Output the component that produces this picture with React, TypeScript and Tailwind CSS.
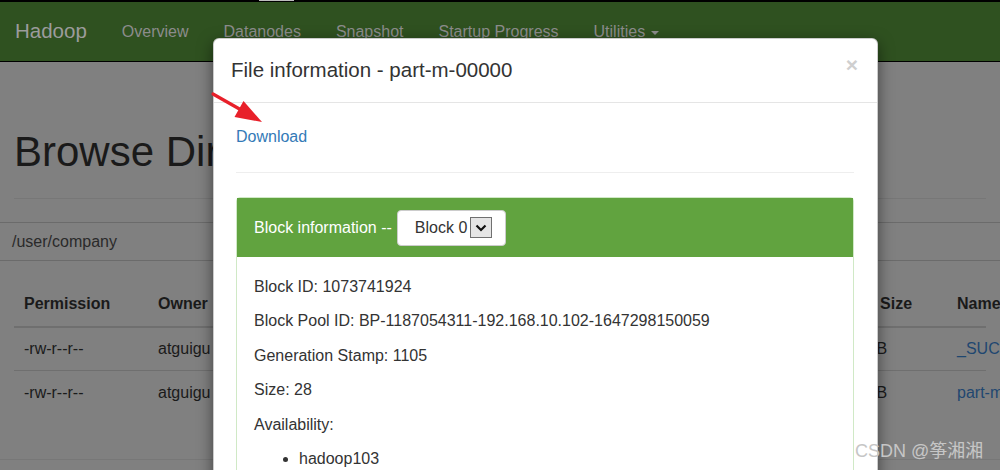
import React from 'react';

const navLinks = ['Overview', 'Datanodes', 'Snapshot', 'Startup Progress'];

const blockLines = [
  'Block ID: 1073741924',
  'Block Pool ID: BP-1187054311-192.168.10.102-1647298150059',
  'Generation Stamp: 1105',
  'Size: 28',
  'Availability:',
];

const rowGrid = 'grid grid-cols-[134px_130px_130px_100px_200px_114px_125px_1fr] items-center whitespace-nowrap';

const App: React.FC = () => {
  return (
    <div className="relative h-[470px] w-[1000px] overflow-hidden bg-[#808080] font-['Liberation_Sans',Arial,sans-serif]">
      {/* strip above the navbar */}
      <div className="h-[2px] bg-black">
        <div className="ml-[259px] h-px w-[35px] bg-[#bdbdbd]" />
      </div>

      <nav className="flex h-[60px] items-center gap-[35px] border-b border-black bg-[#2f5120] pl-[15px]">
        <span className="text-[20.5px] text-[#9c9c9c]">Hadoop</span>
        {navLinks.map((l) => (
          <span key={l} className="text-[16px] text-[#8c8c8c]">
            {l}
          </span>
        ))}
        <span className="flex items-center gap-[6px] text-[16px] text-[#8c8c8c]">
          Utilities
          <span className="mt-[2px] h-0 w-0 border-x-[4px] border-t-[4px] border-x-transparent border-t-[#8c8c8c]" />
        </span>
      </nav>

      <div className="px-[14px]">
        <h1 className="whitespace-nowrap border-b border-[#777] pb-[24px] pt-[68px] text-[42px] leading-[44px] text-[#1a1a1a]">
          Browse Directory
        </h1>
      </div>

      <div className="mt-[23px] flex h-[39px] items-center border-y border-[#6b6b6b] pl-[12px] text-[16px] text-[#2a2a2a]">
        /user/company
      </div>

      <div className="mt-[21px] px-[14px] text-[16px] text-[#1a1a1a]">
        <div className={`${rowGrid} h-[46px] border-b-2 border-[#6f6f6f] font-bold`}>
          <span className="pl-[10px]">Permission</span>
          <span className="pl-[10px]">Owner</span>
          <span className="pl-[10px]">Group</span>
          <span className="pl-[10px]">Size</span>
          <span className="pl-[10px]">Last Modified</span>
          <span className="pl-[10px]">Replication</span>
          <span className="pl-[10px]">Block Size</span>
          <span className="pl-[10px]">Name</span>
        </div>
        <div className={`${rowGrid} h-[43px] border-b border-[#6f6f6f]`}>
          <span className="pl-[10px]">-rw-r--r--</span>
          <span className="pl-[10px]">atguigu</span>
          <span className="pl-[10px]">supergroup</span>
          <span className="pl-[10px]">0 B</span>
          <span className="pl-[10px]">Mar 15 2022</span>
          <span className="pl-[10px]">3</span>
          <span className="pl-[10px]">128 MB</span>
          <span className="pl-[10px] text-[#1f4770]">_SUCCESS</span>
        </div>
        <div className={`${rowGrid} h-[43px]`}>
          <span className="pl-[10px]">-rw-r--r--</span>
          <span className="pl-[10px]">atguigu</span>
          <span className="pl-[10px]">supergroup</span>
          <span className="pl-[10px]">28 B</span>
          <span className="pl-[10px]">Mar 15 2022</span>
          <span className="pl-[10px]">3</span>
          <span className="pl-[10px]">128 MB</span>
          <span className="pl-[10px] text-[#1f4770]">part-m-00000</span>
        </div>
      </div>

      <div className="mt-[45px] border-t border-[#777]" />

      {/* modal */}
      <div className="absolute left-[213px] top-[38px] h-[480px] w-[665px] rounded-[6px] border border-black/20 bg-white shadow-[0_5px_15px_rgba(0,0,0,0.5)]">
        <div className="flex h-[64px] items-center justify-between border-b border-[#e5e5e5] pl-[17px] pr-[19px]">
          <h4 className="text-[20.5px] text-[#333]">File information - part-m-00000</h4>
          <span className="mb-[12px] text-[21px] font-bold leading-none text-[#cfcfcf]">×</span>
        </div>

        <div className="pl-[22px] pr-[23px] pt-[23px]">
          <a className="block text-[16px] leading-[22px] text-[#337ab7]">Download</a>
          <hr className="mt-[24px] border-[#eee]" />

          <div className="mt-[24px] rounded-[4px] border border-[#d0e9c6]">
            <div className="flex h-[59px] items-center bg-[#61a33f] pl-[17px] text-[16px] text-white">
              <span>Block information --</span>
              <div className="ml-[5px] flex h-[36px] w-[109px] items-center rounded-[4px] border border-[#ccc] bg-white pl-[17px] text-[#333]">
                <span>Block 0</span>
                <span className="ml-[3px] flex h-[21px] w-[22px] items-center justify-center border border-[#707070] bg-[#e5e5e5]">
                  <svg width="12" height="8" viewBox="0 0 12 8" fill="none">
                    <path d="M1.5 1.5 6 6l4.5-4.5" stroke="#111" strokeWidth="2.2" />
                  </svg>
                </span>
              </div>
            </div>

            <div className="pl-[17px] pt-[13px] text-[16px] leading-[34.4px] text-[#333]">
              {blockLines.map((l) => (
                <p key={l}>{l}</p>
              ))}
              <ul className="list-disc pl-[45px]">
                <li>hadoop103</li>
              </ul>
            </div>
          </div>
        </div>
      </div>

      {/* red annotation arrow */}
      <svg className="pointer-events-none absolute left-[205px] top-[88px]" width="62" height="40" viewBox="0 0 62 40">
        <line x1="8" y1="6" x2="38" y2="23" stroke="#e8202a" strokeWidth="3.2" strokeLinecap="round" />
        <polygon points="57,34 29.5,29 38.5,13" fill="#e8202a" />
      </svg>

      <div className="absolute left-[855px] top-[439px] whitespace-nowrap text-[18px] leading-[24px] text-[#c6c6c6] font-['Liberation_Sans','Noto_Sans_CJK_SC',sans-serif]">
        CSDN @筝湘湘
      </div>
    </div>
  );
};

export default App;
